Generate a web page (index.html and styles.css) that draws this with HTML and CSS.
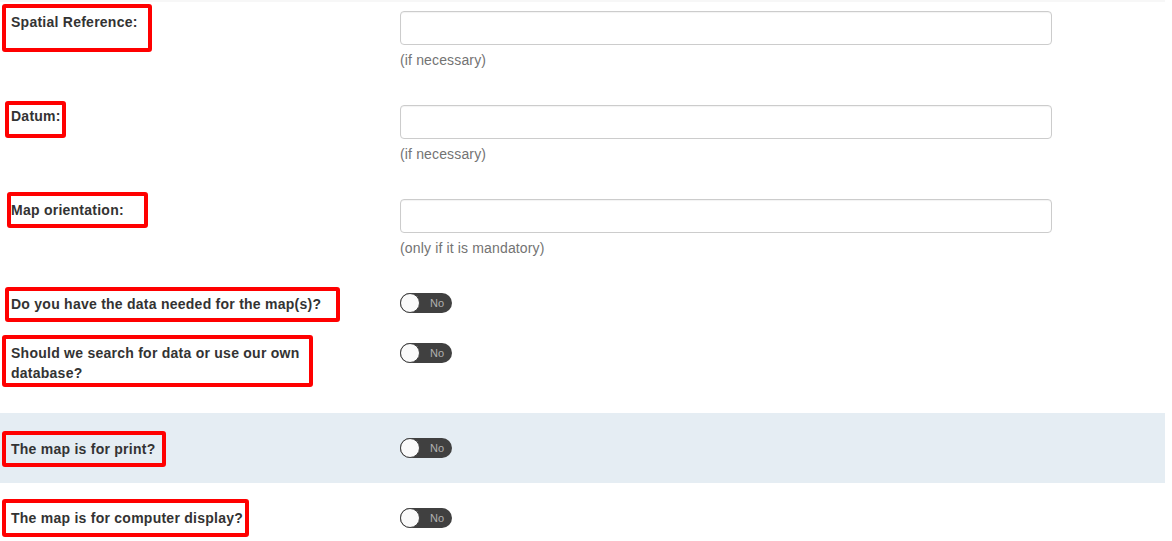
FILE: index.html
```html
<!DOCTYPE html>
<html lang="en">
<head>
    <title>Map Request - Details</title>
    <link rel="stylesheet" href="styles.css">
</head>
<body>
    <div class="map-form">
        <!-- Text inputs -->
        <div class="form-row row-input">
            <div class="label-col"><span class="note note-spatial">Spatial Reference:</span></div>
            <div class="control-col">
                <input type="text" class="text-input">
                <p class="help">(if necessary)</p>
            </div>
        </div>

        <div class="form-row row-input">
            <div class="label-col"><span class="note note-datum">Datum:</span></div>
            <div class="control-col">
                <input type="text" class="text-input">
                <p class="help">(if necessary)</p>
            </div>
        </div>

        <div class="form-row row-input">
            <div class="label-col"><span class="note note-orient">Map orientation:</span></div>
            <div class="control-col">
                <input type="text" class="text-input">
                <p class="help">(only if it is mandatory)</p>
            </div>
        </div>

        <!-- Yes / No switches -->
        <div class="form-row row-data">
            <div class="label-col"><span class="note note-data">Do you have the data needed for the map(s)?</span></div>
            <div class="control-col"><span class="switch"><span class="knob"></span><span class="switch-text">No</span></span></div>
        </div>

        <div class="form-row row-search">
            <div class="label-col"><span class="note note-search">Should we search for data or use our own<br>database?</span></div>
            <div class="control-col"><span class="switch"><span class="knob"></span><span class="switch-text">No</span></span></div>
        </div>

        <div class="form-row row-print">
            <div class="label-col"><span class="note note-print">The map is for print?</span></div>
            <div class="control-col"><span class="switch"><span class="knob"></span><span class="switch-text">No</span></span></div>
        </div>

        <div class="form-row row-display">
            <div class="label-col"><span class="note note-display">The map is for computer display?</span></div>
            <div class="control-col"><span class="switch"><span class="knob"></span><span class="switch-text">No</span></span></div>
        </div>
    </div>
</body>
</html>
```

FILE: styles.css
```css
body {
    margin: 0;
    font-family: "Liberation Sans", Arial, sans-serif;
    font-size: 14px;
    line-height: 18px;
    color: #333;
    background: #fff;
}
.map-form {
    width: 1165px;
    border-top: 2px solid #f7f7f7;
}
.form-row {
    display: flex;
    align-items: flex-start;
    box-sizing: border-box;
}
.row-input {
    height: 94px;
    padding-top: 11px;
}
.row-input:first-child {
    height: 92px;
    padding-top: 9px;
}
.row-data {
    height: 50px;
    padding-top: 11px;
}
.row-search {
    height: 81px;
    padding-top: 11px;
}
.row-print {
    height: 70px;
    padding-top: 25px;
    background-color: #e5edf3;
}
.row-display {
    height: 58px;
    padding-top: 25px;
}
.label-col {
    width: 400px;
    flex-shrink: 0;
    align-self: stretch;
}
.control-col {
    width: 652px;
}

/* red annotation boxes round the labels */
.note {
    display: block;
    box-sizing: border-box;
    border: 4px solid #f00;
    border-radius: 3px;
    font-weight: bold;
    letter-spacing: 0.25px;
    white-space: nowrap;
}
.note-spatial {
    margin: -7px 0 0 2px;
    width: 150px;
    height: 48px;
    padding: 5px 0 0 5px;
}
.note-datum {
    margin: -4px 0 0 5px;
    width: 61px;
    height: 37px;
    padding: 2px 0 0 2px;
}
.note-orient {
    margin: -7px 0 0 7px;
    width: 141px;
    height: 36px;
    padding: 5px 0 0 0;
}
.note-data {
    margin: -6px 0 0 5px;
    width: 335px;
    height: 35px;
    padding: 4px 0 0 2px;
}
.note-search {
    margin: -8px 0 0 2px;
    width: 311px;
    height: 52px;
    padding: 4px 0 0 5px;
    line-height: 20px;
}
.note-print {
    margin: -7px 0 0 2px;
    width: 164px;
    height: 36px;
    padding: 5px 0 0 5px;
}
.note-display {
    margin: -9px 0 0 2px;
    width: 247px;
    height: 38px;
    padding: 6px 0 0 5px;
}

.text-input {
    display: block;
    box-sizing: border-box;
    width: 652px;
    height: 34px;
    margin: 0;
    padding: 6px 12px;
    border: 1px solid #ccc;
    border-radius: 4px;
    font: inherit;
    box-shadow: inset 0 1px 1px rgba(0, 0, 0, 0.05);
}
.help {
    margin: 6px 0 0;
    color: #737373;
    letter-spacing: 0.15px;
}

.switch {
    display: flex;
    align-items: center;
    width: 52px;
    height: 20px;
    border-radius: 10px;
    background-color: #404040;
}
.knob {
    box-sizing: border-box;
    width: 20px;
    height: 20px;
    border-radius: 50%;
    background: #fafafa;
    border: 1px solid #404040;
}
.switch-text {
    margin-left: 10px;
    font-size: 11px;
    color: #b0b0b0;
}
```
